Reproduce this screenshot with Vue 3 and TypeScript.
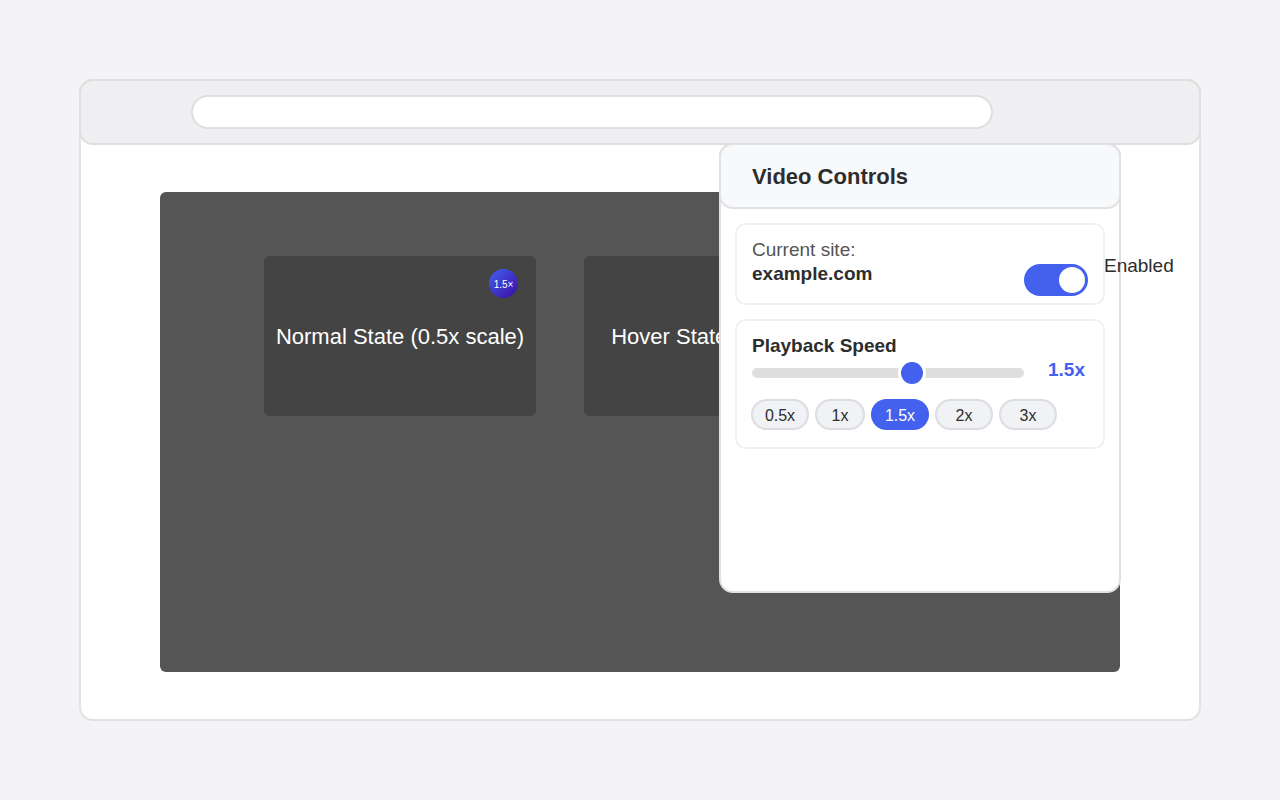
<script setup lang="ts">
import { ref } from 'vue'

const site = 'example.com'
const address = ref('')
const enabled = ref(true)
const speed = ref(1.5)
const presets: number[] = [0.5, 1, 1.5, 2, 3]
const states = [
  { label: 'Normal State (0.5x scale)', badge: true },
  { label: 'Hover State (1x scale)', badge: false },
]
</script>

<template>
  <main class="page">
    <section class="browser">
      <header class="toolbar">
        <input v-model="address" class="address" type="text" aria-label="Address" />
      </header>

      <div class="video">
        <article v-for="state in states" :key="state.label" class="state">
          <span>{{ state.label }}</span>
          <span v-if="state.badge" class="badge">{{ speed }}×</span>
        </article>
      </div>

      <aside class="popup">
        <header class="popup-head">
          <h1>Video Controls</h1>
        </header>
        <div class="popup-body">
          <section class="card site">
            <div>
              <p class="caption">Current site:</p>
              <p class="strong">{{ site }}</p>
            </div>
            <label class="switch">
              <input v-model="enabled" type="checkbox" />
              <span>Enabled</span>
            </label>
          </section>

          <section class="card">
            <label class="strong" for="speed">Playback Speed</label>
            <div class="slider-row">
              <input id="speed" v-model.number="speed" type="range" min="0" max="2.5" step="0.1" />
              <output for="speed">{{ speed }}x</output>
            </div>
            <div class="presets">
              <button
                v-for="p in presets"
                :key="p"
                type="button"
                :class="{ short: p === 1, active: p === speed }"
                @click="speed = p"
              >
                {{ p }}x
              </button>
            </div>
          </section>
        </div>
      </aside>
    </section>
  </main>
</template>

<style>
body {
  margin: 0;
  background: #f4f4f7;
}
</style>

<style scoped>
* {
  box-sizing: border-box;
}

.page {
  padding: 79px;
  font-family: "Liberation Sans", Arial, Helvetica, sans-serif;
  font-size: 19px;
  line-height: 24px;
  color: #2d2d2d;
}

.browser {
  position: relative;
  background: #fff;
  border: 2px solid #e2e2e3;
  border-radius: 14px;
}

.toolbar {
  display: flex;
  margin: -2px;
  padding: 14px 206px 14px 110px;
  background: #efeff1;
  border: 2px solid #dfdfdf;
  border-radius: 14px;
}

.address {
  flex: 1;
  min-width: 0;
  height: 34px;
  padding: 0 16px;
  border: 2px solid #dfdfdf;
  border-radius: 17px;
  background: #fff;
  font: inherit;
  outline: none;
}

.video {
  display: flex;
  align-items: flex-start;
  gap: 48px;
  min-height: 480px;
  margin: 49px 79px 47px;
  padding: 64px 104px;
  background: #555;
  border-radius: 6px;
}

.state {
  position: relative;
  display: flex;
  flex: none;
  align-items: center;
  justify-content: center;
  width: 272px;
  height: 160px;
  padding-top: 2px;
  background: #444;
  border-radius: 6px;
  color: #fff;
  font-size: 22px;
  white-space: nowrap;
}

.badge {
  position: absolute;
  top: 13px;
  right: 18px;
  display: flex;
  align-items: center;
  justify-content: center;
  width: 29px;
  height: 29px;
  padding-top: 2px;
  border-radius: 50%;
  background: linear-gradient(135deg, #4361ee, #3a0ca3);
  font-size: 10px;
}

.popup {
  position: absolute;
  top: 62px;
  right: 78px;
  width: 402px;
  min-height: 450px;
  background: #fff;
  border: 2px solid #e0e1e3;
  border-radius: 14px;
}

.popup-head {
  margin: -2px;
  padding: 20px 31px 18px;
  background: #f8f9fb;
  border: 2px solid #e0e1e3;
  border-radius: 14px;
}

h1 {
  margin: 0;
  font-size: 22px;
  line-height: 24px;
  font-weight: 700;
}

.popup-body {
  display: flex;
  flex-direction: column;
  gap: 14px;
  padding: 16px 14px;
}

.card {
  padding: 13px 15px 17px;
  border: 2px solid #f1f1f1;
  border-radius: 10px;
}

.card + .card {
  padding-bottom: 18px;
}

.site {
  display: flex;
  justify-content: space-between;
}

p {
  margin: 0;
}

.caption {
  color: #555;
}

.strong {
  display: block;
  font-weight: 700;
}

.switch {
  display: flex;
  flex: none;
  align-items: flex-start;
  gap: 16px;
  width: 64px;
  height: 32px;
  padding-top: 16px;
}

.switch input {
  appearance: none;
  flex: none;
  width: 64px;
  height: 32px;
  margin: 10px 0 0;
  padding: 3px;
  border-radius: 16px;
  background: #bbb;
}

.switch input::before {
  content: "";
  display: block;
  width: 26px;
  height: 26px;
  border-radius: 50%;
  background: #fff;
}

.switch input:checked {
  background: #4361ee;
}

.switch input:checked::before {
  margin-left: auto;
}

.slider-row {
  display: flex;
  align-items: flex-start;
  gap: 24px;
}

.slider-row input {
  appearance: none;
  flex: 1;
  min-width: 0;
  height: 28px;
  margin: 1px 0 0;
  background: transparent;
}

.slider-row input::-webkit-slider-runnable-track {
  height: 10px;
  border-radius: 5px;
  background: #dfdfdf;
}

.slider-row input::-webkit-slider-thumb {
  appearance: none;
  width: 28px;
  height: 28px;
  margin-top: -9px;
  border: 3px solid #fff;
  border-radius: 50%;
  background: #4361ee;
}

output {
  width: 40px;
  color: #4361ee;
  font-weight: 700;
}

.presets {
  display: flex;
  gap: 8px;
  margin-top: 13px;
}

.presets button {
  width: 56px;
  height: 29px;
  padding: 2px 0 0;
  border: 1px solid #dcdde0;
  border-radius: 15px;
  box-shadow: 0 0 0 1px #dcdde0;
  background: #f0f2f5;
  color: #2d2d2d;
  font: inherit;
  font-size: 16px;
  line-height: 20px;
}

.presets .short {
  width: 48px;
}

.presets .active {
  border-color: #4361ee;
  box-shadow: 0 0 0 1px #4361ee;
  background: #4361ee;
  color: #fff;
}
</style>
